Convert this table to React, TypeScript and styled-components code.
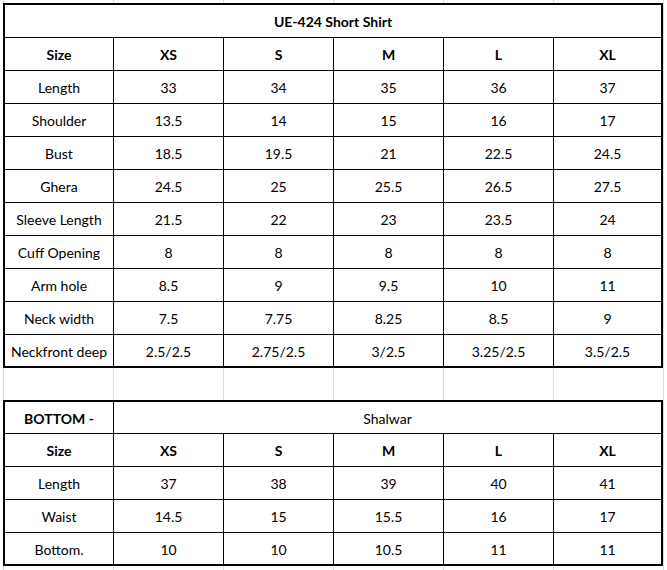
import { FC } from 'react';
import styled, { createGlobalStyle } from 'styled-components';

const GlobalStyle = createGlobalStyle`
  html, body {
    margin: 0;
    padding: 0;
    background: #fff;
  }
`;

const sizes = ['XS', 'S', 'M', 'L', 'XL'];

const shirtRows: [string, string[]][] = [
  ['Length', ['33', '34', '35', '36', '37']],
  ['Shoulder', ['13.5', '14', '15', '16', '17']],
  ['Bust', ['18.5', '19.5', '21', '22.5', '24.5']],
  ['Ghera', ['24.5', '25', '25.5', '26.5', '27.5']],
  ['Sleeve Length', ['21.5', '22', '23', '23.5', '24']],
  ['Cuff Opening', ['8', '8', '8', '8', '8']],
  ['Arm hole', ['8.5', '9', '9.5', '10', '11']],
  ['Neck width', ['7.5', '7.75', '8.25', '8.5', '9']],
  ['Neckfront deep', ['2.5/2.5', '2.75/2.5', '3/2.5', '3.25/2.5', '3.5/2.5']],
];

const bottomRows: [string, string[]][] = [
  ['Length', ['37', '38', '39', '40', '41']],
  ['Waist', ['14.5', '15', '15.5', '16', '17']],
  ['Bottom.', ['10', '10', '10.5', '11', '11']],
];

const colWidths = [109, 110, 110, 110, 110, 107];

const Columns: FC = () => (
  <colgroup>
    {colWidths.map((w, i) => (
      <col key={i} style={{ width: w }} />
    ))}
  </colgroup>
);

const SizeHeader: FC = () => (
  <Row>
    <Cell $bold>Size</Cell>
    {sizes.map((s) => (
      <Cell key={s} $bold>
        {s}
      </Cell>
    ))}
  </Row>
);

const DataRows: FC<{ rows: [string, string[]][] }> = ({ rows }) => (
  <>
    {rows.map(([label, values], r) => (
      <Row key={label} $h={r === rows.length - 1 ? 31 : 33}>
        <Cell>{label}</Cell>
        {values.map((v, i) => (
          <Cell key={i}>{v}</Cell>
        ))}
      </Row>
    ))}
  </>
);

export default function App() {
  return (
    <>
      <GlobalStyle />
      <Sheet>
        <Table>
          <Columns />
          <tbody>
            <Row>
              <Cell $bold colSpan={6}>
                UE-424 Short Shirt
              </Cell>
            </Row>
            <SizeHeader />
            <DataRows rows={shirtRows} />
          </tbody>
        </Table>

        <Table $gap>
          <Columns />
          <tbody>
            <Row $h={32}>
              <Cell $bold>BOTTOM -</Cell>
              <Cell colSpan={5}>Shalwar</Cell>
            </Row>
            <SizeHeader />
            <DataRows rows={bottomRows} />
          </tbody>
        </Table>
      </Sheet>
    </>
  );
}

const Sheet = styled.div`
  min-height: 570px;
  box-sizing: border-box;
  padding: 3px 0 0 3px;
  background-color: #fff;
  background-image: repeating-linear-gradient(
    to right,
    #dadada 0 1px,
    transparent 1px 110px
  );
  background-position: 3px 0;
  font-family: Lato, 'Noto Sans', sans-serif;
  font-size: 14px;
  color: #000;
`;

const Table = styled.table<{ $gap?: boolean }>`
  width: 660px;
  table-layout: fixed;
  border-collapse: separate;
  border-spacing: 0;
  border: 2px solid #000;
  background: #fff;
  margin-top: ${({ $gap }) => ($gap ? '32px' : '0')};

  tr:last-child td {
    border-bottom: none;
  }
`;

const Row = styled.tr<{ $h?: number }>`
  height: ${({ $h }) => $h ?? 33}px;
`;

const Cell = styled.td<{ $bold?: boolean }>`
  box-sizing: border-box;
  padding: 1px 0 0;
  text-align: center;
  vertical-align: middle;
  white-space: nowrap;
  font-weight: ${({ $bold }) => ($bold ? 700 : 400)};
  border-right: 1px solid #000;
  border-bottom: 1px solid #000;

  &:last-child {
    border-right: none;
  }
`;
